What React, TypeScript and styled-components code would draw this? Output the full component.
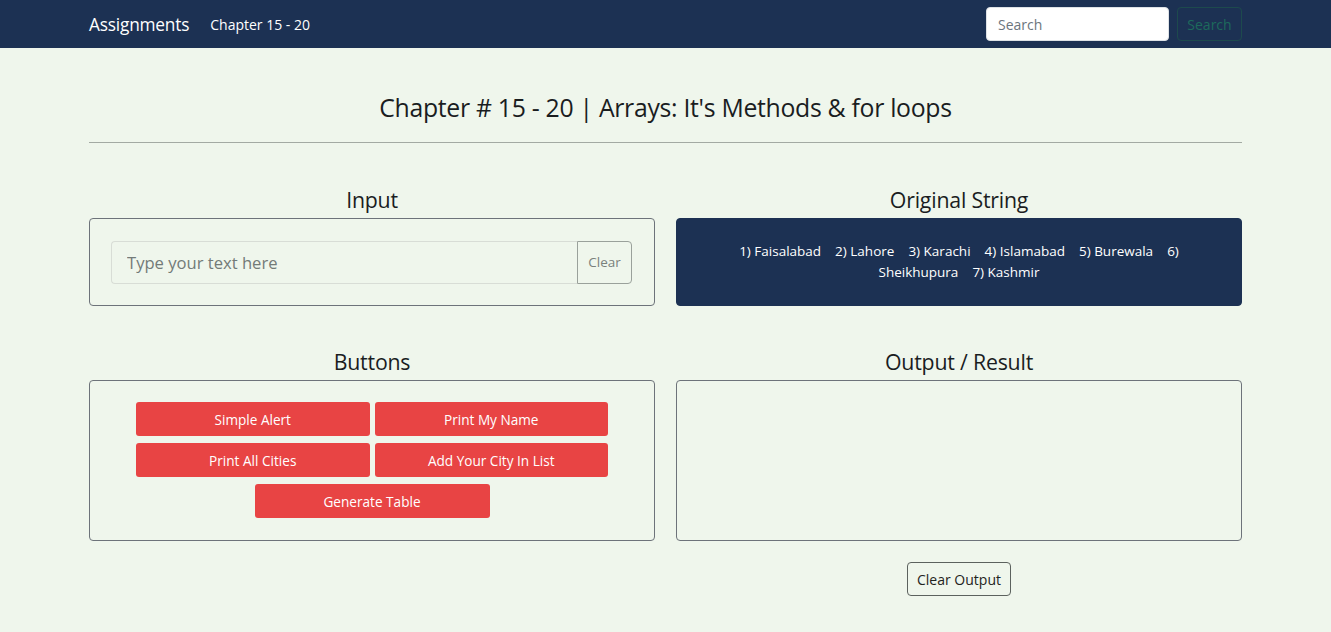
import React from "react";
import styled, { createGlobalStyle } from "styled-components";

const Global = createGlobalStyle`
  * { box-sizing: border-box; }
  body {
    margin: 0;
    background: #eff6ec;
    font-family: "Open Sans", "Noto Sans", sans-serif;
    color: #1a1d1f;
  }
`;

const Nav = styled.nav`
  height: 48px;
  background: #1c3153;
  display: flex;
  align-items: center;
  padding: 0 89px;
`;

const Brand = styled.a`
  color: #fff;
  font-size: 17.3px;
  margin-right: 21px;
  letter-spacing: -0.2px;
`;

const NavLink = styled.a`
  color: #fff;
  font-size: 14px;
`;

const SearchForm = styled.form`
  margin-left: auto;
  display: flex;
  gap: 8px;
`;

const SearchInput = styled.input`
  width: 183px;
  height: 34px;
  border: 1px solid #dee2e6;
  border-radius: 4px;
  padding: 0 11px;
  font-family: inherit;
  font-size: 14px;
  &::placeholder { color: #6c757d; }
`;

const SearchButton = styled.button`
  width: 65px;
  height: 34px;
  background: transparent;
  border: 1px solid #1d4a4d;
  border-radius: 4px;
  color: #1d6a5c;
  font-family: inherit;
  font-size: 14px;
`;

const Main = styled.main`
  padding: 0 89px;
`;

const Title = styled.h1`
  margin: 0;
  padding-top: 42px;
  text-align: center;
  font-size: 24.8px;
  font-weight: 500;
  line-height: 34px;
  letter-spacing: -0.3px;
`;

const Rule = styled.hr`
  margin: 18px 0 0;
  border: none;
  border-top: 1.5px solid #a3aaa3;
`;

const Grid = styled.div`
  display: grid;
  grid-template-columns: 1fr 1fr;
  column-gap: 21px;
  padding-top: 43px;
`;

const Section = styled.section<{ $mb?: number }>`
  display: flex;
  flex-direction: column;
  margin-bottom: ${(p) => p.$mb ?? 0}px;
`;

const Heading = styled.h2`
  margin: 0 0 5px;
  text-align: center;
  font-size: 21.3px;
  font-weight: 500;
  line-height: 27px;
  letter-spacing: -0.2px;
`;

const Box = styled.div<{ $h: number; $dark?: boolean }>`
  height: ${(p) => p.$h}px;
  border: 1px solid ${(p) => (p.$dark ? "#1c3153" : "#6d737a")};
  background: ${(p) => (p.$dark ? "#1c3153" : "transparent")};
  border-radius: 4px;
`;

const InputBox = styled(Box)`
  display: flex;
  align-items: center;
  padding: 0 22px 0 21px;
`;

const InputGroup = styled.div`
  display: flex;
  flex: 1;
  height: 43px;
`;

const TextInput = styled.input`
  flex: 1;
  min-width: 0;
  border: 1px solid #d8ddd6;
  border-right: none;
  border-radius: 4px 0 0 4px;
  background: transparent;
  padding: 0 15px;
  font-family: inherit;
  font-size: 16.6px;
  &::placeholder { color: #737b78; }
`;

const ClearButton = styled.button`
  width: 55px;
  border: 1px solid #9aa19b;
  border-radius: 0 4px 4px 0;
  background: transparent;
  color: #7a817c;
  font-family: inherit;
  font-size: 13.5px;
`;

const StringBox = styled(Box)`
  display: flex;
  align-items: center;
  justify-content: center;
  padding: 0 50px;
  text-align: center;
  color: #fff;
  font-size: 13.5px;
  line-height: 21px;
`;

const ButtonsBox = styled(Box)`
  padding: 21px 46px 0;
  display: grid;
  grid-template-columns: 1fr 1fr;
  column-gap: 5px;
  row-gap: 7px;
  align-content: start;
`;

const RedButton = styled.button<{ $wide?: boolean }>`
  height: 34px;
  background: #e84444;
  color: #fff;
  border: none;
  border-radius: 3px;
  font-family: inherit;
  font-size: 13.6px;
  ${(p) =>
    p.$wide &&
    `grid-column: 1 / span 2; justify-self: center; width: 235px;`}
`;

const OutputBox = styled(Box)`
  padding: 0;
`;

const ClearOutput = styled.button`
  align-self: center;
  margin-top: 21px;
  width: 104px;
  height: 34px;
  background: transparent;
  border: 1px solid #5c625e;
  border-radius: 4px;
  font-family: inherit;
  font-size: 14px;
  color: #1f2421;
`;

const cities = [
  "1) Faisalabad",
  "2) Lahore",
  "3) Karachi",
  "4) Islamabad",
  "5) Burewala",
  "6) Sheikhupura",
  "7) Kashmir",
];

export default function App() {
  return (
    <>
      <Global />
      <Nav>
        <Brand>Assignments</Brand>
        <NavLink>Chapter 15 - 20</NavLink>
        <SearchForm onSubmit={(e) => e.preventDefault()}>
          <SearchInput placeholder="Search" />
          <SearchButton type="button">Search</SearchButton>
        </SearchForm>
      </Nav>
      <Main>
        <Title>Chapter # 15 - 20 | Arrays: It's Methods &amp; for loops</Title>
        <Rule />
        <Grid>
          <Section $mb={42}>
            <Heading>Input</Heading>
            <InputBox $h={88}>
              <InputGroup>
                <TextInput placeholder="Type your text here" />
                <ClearButton type="button">Clear</ClearButton>
              </InputGroup>
            </InputBox>
          </Section>
          <Section $mb={42}>
            <Heading>Original String</Heading>
            <StringBox $h={88} $dark>
              <span>{cities.join("\u00a0\u00a0\u00a0 ")}</span>
            </StringBox>
          </Section>
          <Section>
            <Heading>Buttons</Heading>
            <ButtonsBox $h={161}>
              <RedButton>Simple Alert</RedButton>
              <RedButton>Print My Name</RedButton>
              <RedButton>Print All Cities</RedButton>
              <RedButton>Add Your City In List</RedButton>
              <RedButton $wide>Generate Table</RedButton>
            </ButtonsBox>
          </Section>
          <Section>
            <Heading>Output / Result</Heading>
            <OutputBox $h={161} />
            <ClearOutput type="button">Clear Output</ClearOutput>
          </Section>
        </Grid>
      </Main>
    </>
  );
}
